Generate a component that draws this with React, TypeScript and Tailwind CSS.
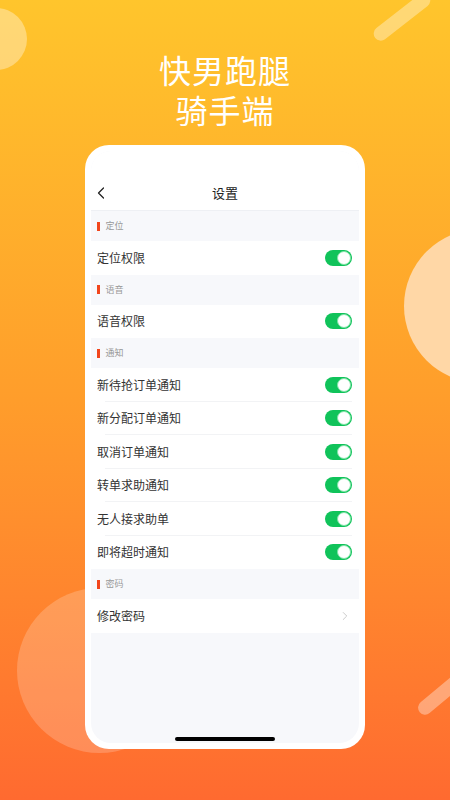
import { ChevronLeft, ChevronRight } from 'lucide-react';

type Row = { label: string; toggle?: boolean };
type Section = { title: string; rows: Row[] };

const sections: Section[] = [
  { title: '定位', rows: [{ label: '定位权限', toggle: true }] },
  { title: '语音', rows: [{ label: '语音权限', toggle: true }] },
  {
    title: '通知',
    rows: [
      { label: '新待抢订单通知', toggle: true },
      { label: '新分配订单通知', toggle: true },
      { label: '取消订单通知', toggle: true },
      { label: '转单求助通知', toggle: true },
      { label: '无人接求助单', toggle: true },
      { label: '即将超时通知', toggle: true },
    ],
  },
  { title: '密码', rows: [{ label: '修改密码' }] },
];

function Toggle() {
  return (
    <div className="w-[27px] h-[16px] rounded-full bg-[#10c35a] flex items-center justify-end p-[1px]">
      <div className="w-[14px] h-[14px] rounded-full bg-white border border-[#7ee3a6]" />
    </div>
  );
}

export default function App() {
  return (
    <div
      className="relative w-[450px] h-[800px] overflow-hidden bg-gradient-to-b from-[#ffc52c] via-[#ff9d2b] to-[#ff6a30]"
      style={{ fontFamily: '"Noto Sans CJK SC", "Noto Sans", sans-serif' }}
    >
      {/* Background decoration */}
      <div className="absolute -left-[35px] top-[8px] w-[62px] h-[62px] rounded-full bg-white/35" />
      <div className="absolute left-[368px] top-[10px] w-[68px] h-[14px] rounded-full bg-white/35 -rotate-[38deg]" />
      <div className="absolute left-[404px] top-[229px] w-[154px] h-[154px] rounded-full bg-[#ffd7a6]" />
      <div className="absolute left-[17px] top-[588px] w-[165px] h-[165px] rounded-full bg-white/20" />
      <div className="absolute left-[412px] top-[684px] w-[66px] h-[14px] rounded-full bg-white/35 -rotate-[40deg]" />

      <div className="relative flex flex-col items-center pt-[53px]">
        {/* Title */}
        <div className="flex flex-col items-center gap-[8px] text-white text-[32px] leading-[32px] tracking-[1px]">
          <span>快男跑腿</span>
          <span>骑手端</span>
        </div>

        {/* Phone card */}
        <div className="mt-[20px] w-[280px] h-[604px] rounded-[24px] bg-white p-[6px]">
          <div className="relative h-full rounded-[20px] bg-[#f7f8fb] overflow-hidden flex flex-col">
            <div className="bg-white pt-[25px] border-b border-[#eef0f4]">
              <div className="relative h-[34px] flex items-center justify-center">
                <ChevronLeft className="absolute left-[0px] w-[20px] h-[20px] text-[#222]" strokeWidth={1.5} />
                <span className="text-[13px] text-[#222]">设置</span>
              </div>
            </div>

            {sections.map((s) => (
              <div key={s.title}>
                <div className="h-[30px] flex items-center px-[6px]">
                  <div className="w-[2.5px] h-[9px] bg-[#f2461c]" />
                  <span className="ml-[6px] text-[9px] text-[#999]">{s.title}</span>
                </div>
                {s.rows.map((r, i) => (
                  <div key={r.label} className="relative h-[33.5px] bg-white flex items-center justify-between pl-[6px] pr-[7px]">
                    <span className="text-[12px] text-[#333]">{r.label}</span>
                    {r.toggle ? (
                      <Toggle />
                    ) : (
                      <ChevronRight className="w-[14px] h-[14px] text-[#bbb]" strokeWidth={1.3} />
                    )}
                    {i < s.rows.length - 1 && (
                      <div className="absolute left-[14px] right-[7px] bottom-0 h-px bg-[#f2f3f5]" />
                    )}
                  </div>
                ))}
              </div>
            ))}

            <div className="absolute bottom-[2px] left-1/2 -translate-x-1/2 w-[100px] h-[4px] rounded-full bg-black" />
          </div>
        </div>
      </div>
    </div>
  );
}
